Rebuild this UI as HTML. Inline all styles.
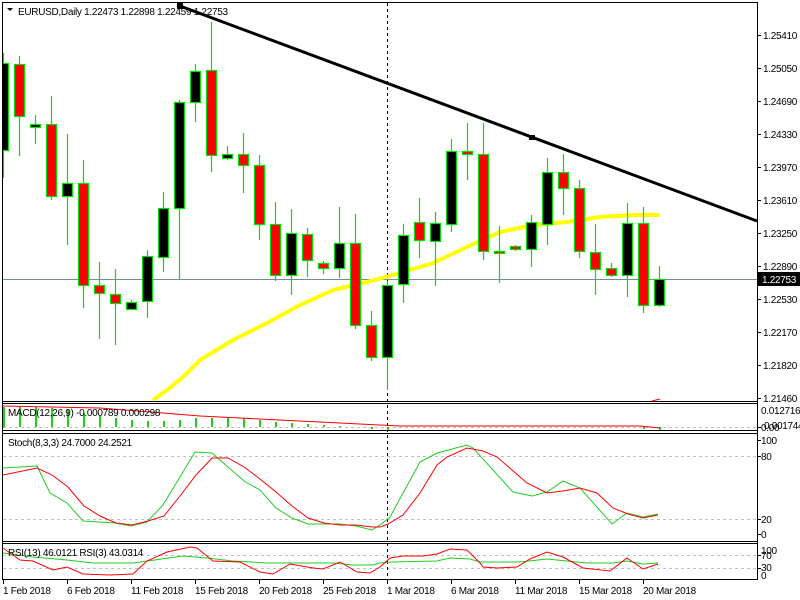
<!DOCTYPE html>
<html><head><meta charset="utf-8"><style>
html,body{margin:0;padding:0;background:#fff;width:800px;height:600px;overflow:hidden}
svg{display:block}
text{font-family:"Liberation Sans",sans-serif;font-size:10px;letter-spacing:-0.3px;fill:#000}
</style></head><body>
<svg width="800" height="600" viewBox="0 0 800 600" xmlns="http://www.w3.org/2000/svg">
<rect width="800" height="600" fill="#fff"/>
<g fill="none" stroke="#000" stroke-width="1">
<rect x="2.5" y="2.5" width="755" height="399"/>
<rect x="2.5" y="403.5" width="755" height="27"/>
<rect x="2.5" y="433.5" width="755" height="108"/>
<rect x="2.5" y="543.5" width="755" height="36"/>
</g>
<g stroke="#c0c0c0" stroke-dasharray="3,3" stroke-width="1">
<line x1="3" y1="427.5" x2="757" y2="427.5"/>
<line x1="3" y1="456.5" x2="757" y2="456.5"/>
<line x1="3" y1="519.5" x2="757" y2="519.5"/>
<line x1="3" y1="555.5" x2="757" y2="555.5"/>
<line x1="3" y1="568.5" x2="757" y2="568.5"/>
</g>
<line x1="387.5" y1="3" x2="387.5" y2="580" stroke="#000" stroke-dasharray="3,3"/>
<line x1="3" y1="279.5" x2="757" y2="279.5" stroke="#778899"/>
<polyline fill="none" stroke="#ffff00" stroke-width="4" points="153,400 167,390 183,377 200,360 233,340 267,323 300,305 333,290 367,282 400,273 433,263 467,247 500,232 533,225 567,222 600,217 633,215 660,215"/>
<g stroke="#00e000" stroke-width="1.2">
<line x1="3.5" y1="53" x2="3.5" y2="178"/><rect x="-1.5" y="63.5" width="10" height="87" fill="#000"/>
<line x1="19.5" y1="56" x2="19.5" y2="156"/><rect x="14.5" y="64.5" width="10" height="52" fill="#f00"/>
<line x1="35.5" y1="115" x2="35.5" y2="144"/><rect x="30.5" y="124.5" width="10" height="3" fill="#000"/>
<line x1="51.5" y1="96" x2="51.5" y2="200"/><rect x="46.5" y="124.5" width="10" height="72" fill="#f00"/>
<line x1="67.5" y1="134" x2="67.5" y2="245"/><rect x="62.5" y="183.5" width="10" height="13" fill="#000"/>
<line x1="83.5" y1="160" x2="83.5" y2="308"/><rect x="78.5" y="183.5" width="10" height="102" fill="#f00"/>
<line x1="99.5" y1="262" x2="99.5" y2="339"/><rect x="94.5" y="285.5" width="10" height="8" fill="#f00"/>
<line x1="115.5" y1="269" x2="115.5" y2="345"/><rect x="110.5" y="294.5" width="10" height="9" fill="#f00"/>
<line x1="131.5" y1="300" x2="131.5" y2="310"/><rect x="126.5" y="302.5" width="10" height="7" fill="#000"/>
<line x1="147.5" y1="250" x2="147.5" y2="318"/><rect x="142.5" y="256.5" width="10" height="45" fill="#000"/>
<line x1="163.5" y1="192" x2="163.5" y2="272"/><rect x="158.5" y="208.5" width="10" height="49" fill="#000"/>
<line x1="179.5" y1="100" x2="179.5" y2="279"/><rect x="174.5" y="102.5" width="10" height="106" fill="#000"/>
<line x1="195.5" y1="64" x2="195.5" y2="122"/><rect x="190.5" y="71.5" width="10" height="31" fill="#000"/>
<line x1="211.5" y1="22" x2="211.5" y2="172"/><rect x="206.5" y="70.5" width="10" height="85" fill="#f00"/>
<line x1="227.5" y1="146" x2="227.5" y2="160"/><rect x="222.5" y="154.5" width="10" height="4" fill="#000"/>
<line x1="243.5" y1="133" x2="243.5" y2="193"/><rect x="238.5" y="154.5" width="10" height="11" fill="#f00"/>
<line x1="259.5" y1="155" x2="259.5" y2="240"/><rect x="254.5" y="165.5" width="10" height="59" fill="#f00"/>
<line x1="275.5" y1="202" x2="275.5" y2="281"/><rect x="270.5" y="224.5" width="10" height="51" fill="#f00"/>
<line x1="291.5" y1="209" x2="291.5" y2="295"/><rect x="286.5" y="233.5" width="10" height="42" fill="#000"/>
<line x1="307.5" y1="228" x2="307.5" y2="277"/><rect x="302.5" y="234.5" width="10" height="26" fill="#f00"/>
<line x1="323.5" y1="261" x2="323.5" y2="274"/><rect x="318.5" y="263.5" width="10" height="5" fill="#f00"/>
<line x1="339.5" y1="207" x2="339.5" y2="278"/><rect x="334.5" y="243.5" width="10" height="25" fill="#000"/>
<line x1="355.5" y1="214" x2="355.5" y2="329"/><rect x="350.5" y="243.5" width="10" height="82" fill="#f00"/>
<line x1="371.5" y1="311" x2="371.5" y2="361"/><rect x="366.5" y="325.5" width="10" height="32" fill="#f00"/>
<line x1="387.5" y1="281" x2="387.5" y2="390"/><rect x="382.5" y="285.5" width="10" height="72" fill="#000"/>
<line x1="403.5" y1="224" x2="403.5" y2="303"/><rect x="398.5" y="235.5" width="10" height="49" fill="#000"/>
<line x1="419.5" y1="198" x2="419.5" y2="258"/><rect x="414.5" y="222.5" width="10" height="18" fill="#f00"/>
<line x1="435.5" y1="212" x2="435.5" y2="286"/><rect x="430.5" y="223.5" width="10" height="18" fill="#000"/>
<line x1="451.5" y1="139" x2="451.5" y2="232"/><rect x="446.5" y="151.5" width="10" height="73" fill="#000"/>
<line x1="467.5" y1="123" x2="467.5" y2="180"/><rect x="462.5" y="151.5" width="10" height="3" fill="#f00"/>
<line x1="483.5" y1="123" x2="483.5" y2="260"/><rect x="478.5" y="154.5" width="10" height="97" fill="#f00"/>
<line x1="499.5" y1="226" x2="499.5" y2="283"/><rect x="494.5" y="251.5" width="10" height="2" fill="#f00"/>
<line x1="515.5" y1="245" x2="515.5" y2="251"/><rect x="510.5" y="246.5" width="10" height="3" fill="#f00"/>
<line x1="531.5" y1="215" x2="531.5" y2="267"/><rect x="526.5" y="222.5" width="10" height="27" fill="#000"/>
<line x1="547.5" y1="158" x2="547.5" y2="245"/><rect x="542.5" y="172.5" width="10" height="52" fill="#000"/>
<line x1="563.5" y1="154" x2="563.5" y2="215"/><rect x="558.5" y="172.5" width="10" height="16" fill="#f00"/>
<line x1="579.5" y1="180" x2="579.5" y2="258"/><rect x="574.5" y="188.5" width="10" height="63" fill="#f00"/>
<line x1="595.5" y1="224" x2="595.5" y2="295"/><rect x="590.5" y="252.5" width="10" height="17" fill="#f00"/>
<line x1="611.5" y1="263" x2="611.5" y2="277"/><rect x="606.5" y="268.5" width="10" height="7" fill="#f00"/>
<line x1="627.5" y1="203" x2="627.5" y2="297"/><rect x="622.5" y="223.5" width="10" height="52" fill="#000"/>
<line x1="643.5" y1="207" x2="643.5" y2="313"/><rect x="638.5" y="223.5" width="10" height="82" fill="#f00"/>
<line x1="659.5" y1="266" x2="659.5" y2="307"/><rect x="654.5" y="279.5" width="10" height="26" fill="#000"/>
</g>
<rect x="0" y="0" width="2" height="600" fill="#fff"/>
<line x1="2.5" y1="2" x2="2.5" y2="580" stroke="#000"/>
<line x1="180" y1="6" x2="757" y2="221" stroke="#000" stroke-width="3"/>
<rect x="177" y="3" width="6" height="6" fill="#000"/>
<rect x="529" y="135" width="6" height="5" fill="#000"/>
<polyline fill="none" stroke="#f00" points="652,401 660,399"/>
<polygon points="7,8 13,8 10,11" fill="#000"/>
<text x="18" y="15">EURUSD,Daily  1.22473 1.22898 1.22459 1.22753</text>
<g stroke="#22cc22" stroke-width="2">
<line x1="4" y1="407" x2="4" y2="427"/><line x1="20" y1="407" x2="20" y2="427"/><line x1="36" y1="407" x2="36" y2="427"/><line x1="52" y1="408" x2="52" y2="427"/><line x1="68" y1="410" x2="68" y2="427"/><line x1="84" y1="413" x2="84" y2="427"/><line x1="100" y1="416" x2="100" y2="427"/><line x1="116" y1="418" x2="116" y2="427"/><line x1="132" y1="420" x2="132" y2="427"/><line x1="148" y1="421" x2="148" y2="427"/><line x1="164" y1="421" x2="164" y2="427"/><line x1="180" y1="420" x2="180" y2="427"/><line x1="196" y1="418" x2="196" y2="427"/><line x1="212" y1="418" x2="212" y2="427"/><line x1="228" y1="418" x2="228" y2="427"/><line x1="244" y1="418" x2="244" y2="427"/><line x1="260" y1="420" x2="260" y2="427"/><line x1="276" y1="422" x2="276" y2="427"/><line x1="292" y1="423" x2="292" y2="427"/><line x1="308" y1="424" x2="308" y2="427"/><line x1="324" y1="425" x2="324" y2="427"/><line x1="340" y1="426" x2="340" y2="427"/><line x1="372" y1="427" x2="372" y2="429"/><line x1="388" y1="427" x2="388" y2="430"/><line x1="644" y1="427" x2="644" y2="429"/><line x1="660" y1="427" x2="660" y2="430"/>
</g>
<polyline fill="none" stroke="#f00" points="3,406 100,408 200,416 300,421 400,426 640,426 660,428"/>
<text x="8" y="416">MACD(12,26,9) -0.000789 0.000298</text>
<polyline fill="none" stroke="#22cc22" points="3,468 37,466 50,493 67,503 83,521 115,523 131,526 147,522 163,505 180,477 195,452 212,453 228,467 244,481 260,490 276,508 292,518 308,524 340,524 356,526 372,530 380,525 390,517 420,462 437,453 467,445 473,448 513,492 532,496 547,492 563,481 580,488 612,524 627,513 643,517 658,514"/>
<polyline fill="none" stroke="#f00" points="3,475 37,468 52,475 68,487 84,506 100,516 116,523 132,525 148,521 164,516 180,496 196,475 212,458 228,458 244,467 260,479 276,492 292,506 308,518 324,523 340,525 356,525 372,527 380,527 388,524 403,515 420,493 437,465 447,457 467,448 483,451 497,457 527,483 547,493 563,491 580,488 597,493 613,508 628,514 643,518 658,515"/>
<text x="8" y="446">Stoch(8,3,3) 24.7000 24.2521</text>
<polyline fill="none" stroke="#22cc22" points="3,553 33,557 67,560 93,563 133,563 183,556 207,558 233,561 267,563 333,563 353,565 373,565 380,563 393,562 437,561 450,558 470,559 480,562 520,562 547,559 567,561 587,563 613,563 627,561 643,564 658,563"/>
<polyline fill="none" stroke="#f00" points="3,548 20,560 33,561 53,570 67,567 83,574 110,575 133,574 147,561 167,552 190,547 197,548 213,561 240,562 260,572 273,574 290,564 313,568 323,569 340,562 357,572 370,573 380,567 390,558 403,556 423,556 437,554 450,549 467,550 480,563 483,567 497,568 517,567 530,559 547,552 563,557 583,568 610,571 627,558 643,569 658,564"/>
<text x="8" y="556">RSI(13) 46.0121  RSI(3) 43.0314</text>
<g stroke="#000">
<line x1="757.5" y1="2" x2="757.5" y2="580"/>
<line x1="757" y1="35.5" x2="761" y2="35.5"/><line x1="757" y1="68.5" x2="761" y2="68.5"/><line x1="757" y1="101.5" x2="761" y2="101.5"/><line x1="757" y1="134.5" x2="761" y2="134.5"/><line x1="757" y1="167.5" x2="761" y2="167.5"/><line x1="757" y1="200.5" x2="761" y2="200.5"/><line x1="757" y1="233.5" x2="761" y2="233.5"/><line x1="757" y1="266.5" x2="761" y2="266.5"/><line x1="757" y1="299.5" x2="761" y2="299.5"/><line x1="757" y1="332.5" x2="761" y2="332.5"/><line x1="757" y1="365.5" x2="761" y2="365.5"/><line x1="757" y1="398.5" x2="761" y2="398.5"/>
<line x1="757" y1="427.5" x2="761" y2="427.5"/><line x1="757" y1="440.5" x2="761" y2="440.5"/><line x1="757" y1="456.5" x2="761" y2="456.5"/><line x1="757" y1="519.5" x2="761" y2="519.5"/><line x1="757" y1="534.5" x2="761" y2="534.5"/><line x1="757" y1="555.5" x2="761" y2="555.5"/><line x1="757" y1="568.5" x2="761" y2="568.5"/>
</g>
<g>
<text x="763" y="39">1.25410</text><text x="763" y="72">1.25050</text><text x="763" y="105">1.24690</text><text x="763" y="138">1.24330</text><text x="763" y="171">1.23970</text><text x="763" y="204">1.23610</text><text x="763" y="237">1.23250</text><text x="763" y="270">1.22890</text><text x="763" y="303">1.22530</text><text x="763" y="336">1.22170</text><text x="763" y="369">1.21820</text><text x="763" y="402">1.21460</text>
<text x="761" y="414">0.012716</text><text x="764" y="429">0.001744</text><text x="761" y="431">0.00</text>
<text x="761" y="444">100</text><text x="761" y="460">80</text><text x="761" y="523">20</text><text x="761" y="538">0</text>
<text x="761" y="554">100</text><text x="761" y="559">70</text><text x="761" y="571">30</text><text x="761" y="579">0</text>
</g>
<rect x="758" y="272" width="42" height="14" fill="#000"/>
<text x="762" y="283" style="fill:#fff">1.22753</text>
<g stroke="#000">
<line x1="3.5" y1="580" x2="3.5" y2="584"/><line x1="67.5" y1="580" x2="67.5" y2="584"/><line x1="131.5" y1="580" x2="131.5" y2="584"/><line x1="195.5" y1="580" x2="195.5" y2="584"/><line x1="259.5" y1="580" x2="259.5" y2="584"/><line x1="323.5" y1="580" x2="323.5" y2="584"/><line x1="387.5" y1="580" x2="387.5" y2="584"/><line x1="451.5" y1="580" x2="451.5" y2="584"/><line x1="515.5" y1="580" x2="515.5" y2="584"/><line x1="579.5" y1="580" x2="579.5" y2="584"/><line x1="643.5" y1="580" x2="643.5" y2="584"/>
</g>
<g>
<text x="3" y="594">1 Feb 2018</text><text x="67" y="594">6 Feb 2018</text><text x="131" y="594">11 Feb 2018</text><text x="195" y="594">15 Feb 2018</text><text x="259" y="594">20 Feb 2018</text><text x="323" y="594">25 Feb 2018</text><text x="387" y="594">1 Mar 2018</text><text x="451" y="594">6 Mar 2018</text><text x="515" y="594">11 Mar 2018</text><text x="579" y="594">15 Mar 2018</text><text x="643" y="594">20 Mar 2018</text>
</g>
</svg>
</body></html>
